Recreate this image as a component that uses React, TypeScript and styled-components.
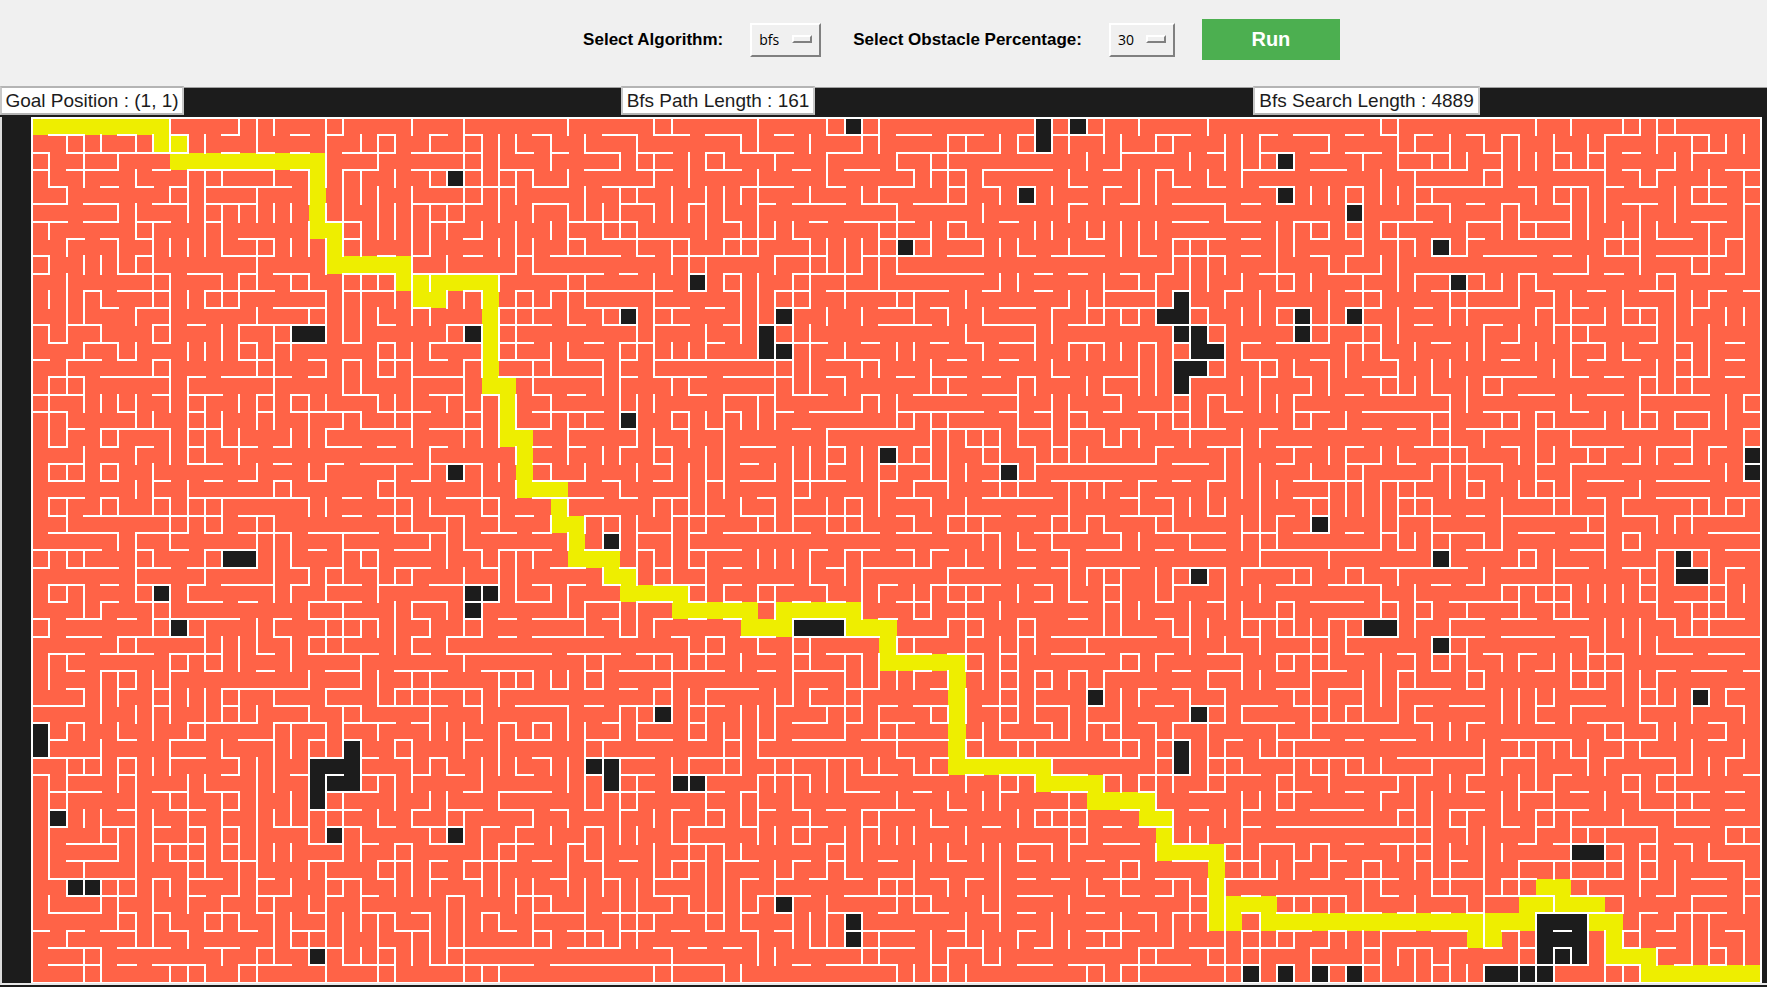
import React from "react";
import styled, { createGlobalStyle } from "styled-components";

const COLS = 100;
const ROWS = 50;
const PITCH = 17.29;

const at = (n: number) => Math.round(n * PITCH);

/* Cells of the found route: row number, then first and last column of each stretch. */
const route: number[][] = [
  [0, 0, 7], [1, 7, 8], [2, 8, 16], [3, 16, 16], [4, 16, 16], [5, 16, 16], [6, 16, 17], [7, 17, 17],
  [8, 17, 21], [9, 21, 26], [10, 22, 23], [10, 26, 26], [11, 26, 26], [12, 26, 26], [13, 26, 26],
  [14, 26, 26], [15, 26, 27], [16, 27, 27], [17, 27, 27], [18, 27, 28], [19, 28, 28], [20, 28, 28],
  [21, 28, 30], [22, 30, 30], [23, 30, 31], [24, 31, 31], [25, 31, 33], [26, 33, 34], [27, 34, 37],
  [28, 37, 41], [28, 43, 47], [29, 41, 43], [29, 47, 49], [30, 49, 49], [31, 49, 53], [32, 53, 53],
  [33, 53, 53], [34, 53, 53], [35, 53, 53], [36, 53, 53], [37, 53, 58], [38, 58, 61], [39, 61, 64],
  [40, 64, 65], [41, 65, 65], [42, 65, 68], [43, 68, 68], [44, 68, 68], [44, 87, 88], [45, 68, 71],
  [45, 86, 90], [46, 68, 69], [46, 71, 86], [46, 90, 91], [47, 83, 84], [47, 91, 91], [48, 91, 93],
  [49, 93, 99],
];

/* Cells the search never reached, in the same form. */
const unreached: number[][] = [
  [0, 47, 47], [0, 58, 58], [0, 60, 60], [1, 58, 58], [2, 72, 72], [3, 24, 24], [4, 57, 57], [4, 72, 72],
  [5, 76, 76], [7, 50, 50], [7, 81, 81], [9, 38, 38], [9, 82, 82], [10, 66, 66], [11, 34, 34], [11, 43, 43],
  [11, 65, 66], [11, 73, 73], [11, 76, 76], [12, 15, 16], [12, 25, 25], [12, 42, 42], [12, 66, 66],
  [12, 67, 67], [12, 73, 73], [13, 42, 43], [13, 67, 68], [14, 66, 67], [15, 66, 66], [17, 34, 34],
  [19, 49, 49], [19, 99, 99], [20, 24, 24], [20, 56, 56], [20, 99, 99], [23, 74, 74], [24, 33, 33],
  [25, 11, 12], [25, 81, 81], [25, 95, 95], [26, 67, 67], [26, 95, 96], [27, 7, 7], [27, 25, 26],
  [28, 25, 25], [29, 8, 8], [29, 44, 46], [29, 77, 78], [30, 81, 81], [33, 61, 61], [33, 96, 96],
  [34, 36, 36], [34, 67, 67], [35, 0, 0], [36, 0, 0], [36, 18, 18], [36, 66, 66], [37, 16, 18],
  [37, 32, 33], [37, 66, 66], [38, 16, 18], [38, 33, 33], [38, 37, 38], [39, 16, 16], [40, 1, 1],
  [41, 17, 17], [41, 24, 24], [42, 89, 90], [44, 2, 3], [45, 43, 43], [46, 47, 47], [46, 87, 89],
  [47, 47, 47], [47, 87, 89], [48, 16, 16], [48, 87, 89], [49, 70, 70], [49, 72, 72], [49, 74, 74],
  [49, 76, 76], [49, 84, 87],
];

/* Walls under each row, as start and end column pairs. */
const floors: string[] = [
  "1 3 5 6 8 9 11 12 15 16 17 18 20 21 23 24 25 26 29 30 33 35 36 38 39 41 43 44 46 49 50 52 53 55 57 58 59 62 65 67 71 72 73 75 76 77 78 79 80 81 83 84 85 86 91 93 94 97",
  "0 1 2 9 11 12 13 14 15 16 18 21 22 26 28 29 30 31 32 34 35 37 39 40 41 44 46 48 50 56 57 59 63 66 68 69 71 73 74 75 76 78 79 82 84 85 88 89 90 91 92 93 96 98",
  "0 1 2 5 7 8 9 14 15 16 18 20 22 26 27 29 32 34 35 37 39 41 44 45 47 49 50 51 52 54 55 59 62 63 65 66 70 73 74 76 79 83 84 85 88 91 92 93 94 95 98 100",
  "1 2 4 5 6 7 8 9 10 15 23 28 29 31 33 36 41 44 46 47 49 51 53 54 55 56 57 58 60 61 62 63 66 67 68 69 71 73 76 77 80 85 86 87 88 90 91 92 93 94 96 98 99 100",
  "0 2 3 5 7 9 10 13 22 26 29 31 34 36 38 39 42 43 44 47 48 50 51 54 57 58 60 61 63 64 66 69 70 71 72 73 76 77 80 82 83 84 85 86 88 89 92 94 96 98 99 100",
  "0 2 3 5 6 8 10 11 17 19 23 25 31 35 40 41 45 46 47 51 53 54 56 57 66 68 69 71 73 75 76 77 78 81 83 85 86 89 96 98",
  "2 3 4 5 6 7 12 14 18 19 25 26 31 32 33 38 40 43 44 45 49 52 53 55 61 62 66 69 70 71 74 75 76 77 78 80 81 82 83 84 86 89 91 93 94 96 98 99",
  "0 1 6 7 11 14 20 21 22 23 25 26 28 29 30 34 35 36 37 42 43 46 48 52 53 55 57 58 59 62 64 65 66 69 70 71 74 75 76 77 81 83 84 87 88 89 91 93 94 98",
  "0 1 5 8 9 11 12 13 14 16 18 21 22 28 29 33 34 35 38 39 40 41 44 48 50 55 58 59 60 61 63 64 65 66 71 73 75 78 80 84 86 87 88 90 91 92 94 95 96 97 98 99",
  "3 4 5 8 10 14 15 17 18 21 25 26 28 29 30 37 38 39 40 41 43 45 46 53 55 56 58 59 62 65 66 67 69 70 72 73 76 78 81 85 87 88 90 91 93 95 97 98 99 100",
  "4 5 6 8 10 12 14 17 22 23 27 30 32 35 36 38 39 40 43 45 49 51 52 53 56 58 59 60 61 66 67 68 72 74 76 78 80 81 82 86 87 88 89 90 92 94 96 97",
  "0 1 2 4 7 8 9 10 12 17 20 21 24 26 27 30 31 32 33 35 36 38 40 41 42 44 49 52 55 58 60 62 63 64 65 69 72 78 80 81 84 85 88 91 92 94",
  "1 2 3 5 7 8 12 13 14 17 18 19 20 21 23 26 27 29 32 33 34 36 39 40 43 46 48 49 52 53 54 55 56 58 60 62 64 65 66 67 68 69 70 71 72 75 76 78 81 82 85 86 89 91 93 94 95 96 98 99",
  "0 1 2 4 5 6 7 8 12 14 16 17 18 19 20 22 23 24 25 26 27 30 31 33 34 35 36 44 46 49 53 54 56 57 66 69 70 72 74 75 78 79 85 86 90 91 92 93 95 96 98 99",
  "1 3 4 8 9 10 11 15 16 17 20 21 22 25 27 33 34 35 36 39 40 44 46 47 50 51 52 54 55 56 57 58 59 60 62 64 67 69 71 72 73 74 77 79 84 87 89 90 91 92 93 94 95 97 98 99",
  "0 3 7 8 9 11 13 14 15 16 18 20 23 25 26 27 29 30 31 32 38 39 40 43 44 46 48 49 51 54 55 57 62 63 66 67 68 69 73 74 76 77 78 80 81 82 84 85 86 88 90 92 93 97 99 100",
  "0 2 5 6 9 10 13 14 15 19 20 23 25 26 29 33 34 35 37 38 40 41 43 44 45 48 50 55 56 57 58 59 60 61 62 63 64 67 69 70 73 75 77 82 84 86 87 88 89 90 93 94 95 97 99 100",
  "2 3 4 8 9 11 17 18 19 22 23 26 28 30 31 33 34 35 37 38 39 40 44 45 46 51 52 56 57 59 60 62 63 64 66 69 71 72 73 74 75 76 77 78 79 80 81 82 83 86 87 91 92 94 95 97 99 100",
  "1 2 4 5 6 7 9 10 11 13 14 15 17 19 20 21 23 24 29 30 31 32 34 35 36 37 41 43 46 47 49 50 51 52 54 56 57 58 59 60 62 63 65 66 68 70 72 74 76 77 80 83 85 86 89 92 94 96 97 98 99 100",
  "1 3 4 5 9 11 14 15 17 18 19 22 23 26 29 30 36 37 41 42 46 47 49 52 55 57 58 65 66 68 72 73 76 78 79 80 81 85 87 88 89 91 92 93 95 96 99 100",
  "1 3 4 5 7 8 10 11 12 13 14 15 16 17 20 21 22 23 24 25 29 32 33 34 36 37 39 40 41 43 44 47 49 50 51 53 55 58 59 63 64 65 66 67 68 69 73 77 78 81 83 84 87 88 90 92 94 97 99 100",
  "1 3 4 5 7 8 9 16 18 19 20 22 24 27 29 33 34 35 36 38 42 43 44 45 47 48 50 52 55 59 63 64 65 66 73 75 79 81 83 84 86 89 90 91 92 93 94 97 98 100",
  "1 2 3 11 12 14 18 19 20 22 23 25 26 27 28 29 32 34 37 40 41 43 44 48 50 51 53 56 57 58 59 60 61 62 63 66 68 69 72 73 74 75 79 82 83 84 85 91 92 94 95 99",
  "1 5 6 9 10 11 12 15 16 20 21 24 26 28 29 30 33 34 35 37 38 39 40 45 46 49 50 52 53 56 58 61 62 63 65 69 70 72 73 75 76 77 78 79 81 84 86 88 89 91 92 93 97 100",
  "0 4 6 7 8 9 10 13 16 17 18 20 21 23 25 26 27 30 32 34 35 36 38 41 45 46 47 49 50 51 52 53 57 58 59 60 61 63 65 66 67 69 71 78 79 80 81 82 83 85 86 87 89 91 92 93 94 97 98 100",
  "0 1 2 5 6 8 9 13 15 16 17 18 19 20 21 23 26 27 30 32 34 35 36 37 38 39 40 41 46 47 48 52 53 55 57 58 59 60 61 64 66 69 70 74 76 77 78 83 85 87 88 90 92 94 95 97 98 99",
  "1 3 4 5 6 8 9 10 11 14 15 16 17 19 20 22 23 27 29 30 31 32 33 34 36 39 40 41 42 44 45 46 49 50 52 56 58 59 62 63 66 68 72 74 75 78 81 82 83 84 85 89 93 94 95 98",
  "1 2 4 5 6 8 9 11 12 13 16 19 22 24 25 27 28 30 32 34 35 37 38 39 40 41 42 43 44 45 46 47 50 52 53 55 58 59 60 61 62 63 65 66 68 69 72 73 74 77 78 79 80 81 82 86 87 89 93 94 95 98",
  "0 1 2 4 5 6 7 12 14 15 16 20 22 23 25 26 27 28 29 32 33 34 36 37 38 39 40 41 44 47 49 50 51 52 53 55 57 58 60 61 65 66 70 73 75 79 80 81 82 84 85 87 88 90 94 95 96 99",
  "0 1 2 4 5 10 14 15 16 19 22 23 24 26 27 28 29 33 34 35 37 38 39 40 41 43 44 49 50 53 54 55 57 58 59 65 66 67 70 71 72 75 76 79 81 84 85 88 89 90 95 100",
  "1 3 4 7 8 11 13 14 16 20 22 23 24 30 31 34 35 37 38 40 42 43 44 45 46 48 50 52 53 55 56 57 59 62 63 64 65 66 68 70 72 75 76 77 79 80 81 83 84 85 86 87 90 92 94 96 97 99",
  "2 3 4 6 8 9 10 11 13 14 17 19 21 24 26 29 32 33 34 40 42 43 44 47 51 52 54 55 56 57 58 59 60 61 62 64 66 67 68 70 72 73 74 76 79 80 81 82 83 84 87 88 89 92 94 95 96 98 99 100",
  "2 3 5 6 7 8 11 16 17 19 21 26 27 29 30 31 32 33 34 35 36 37 39 42 45 46 47 49 52 53 56 57 58 59 61 62 64 65 66 67 68 69 72 74 75 77 79 82 83 84 89 91 93 94 96 97 98 99",
  "0 3 7 8 11 12 14 16 17 19 20 24 25 26 28 31 32 33 34 37 38 40 43 44 45 48 49 50 51 53 55 57 58 60 61 62 65 66 67 69 70 72 73 75 76 77 80 81 82 84 87 88 89 91 93 95 96 97 98 99",
  "0 1 2 3 9 13 14 17 18 21 22 23 27 28 29 30 33 34 35 37 38 39 44 46 47 48 49 51 52 53 56 57 58 59 61 63 64 65 66 69 70 73 74 79 80 81 83 84 87 88 90 92 93 94 97 98",
  "1 2 5 6 8 10 12 14 16 17 18 19 21 22 25 26 28 30 32 34 35 37 38 39 40 41 42 43 44 47 48 53 54 55 56 60 62 64 65 67 69 70 72 75 76 77 78 80 85 89 91 94 97 98",
  "0 4 5 6 8 10 11 12 16 18 19 20 21 22 23 24 29 30 32 36 38 41 42 48 50 51 52 53 54 64 65 66 68 70 71 77 79 84 85 87 89 90 91 92 93 95 98 99",
  "0 1 2 4 5 6 11 12 15 16 17 18 19 21 22 23 24 25 28 29 32 33 34 36 37 41 42 45 48 50 51 53 54 55 56 58 59 61 62 63 64 67 68 71 72 73 74 75 76 81 83 84 88 89 92 93 94 96 99 100",
  "1 4 7 9 10 12 17 20 25 26 27 30 33 36 37 40 41 42 47 49 51 52 56 57 59 61 64 65 67 69 72 74 76 77 78 79 83 84 86 88 89 90 92 93 94 97 98 99",
  "1 2 5 6 8 10 11 12 16 19 22 23 24 26 27 29 30 31 32 33 34 35 37 38 39 40 42 43 44 45 46 47 48 51 53 54 58 61 63 64 65 66 67 68 70 71 72 73 74 77 79 80 82 84 87 90 93 97 98 99",
  "1 2 4 6 7 8 9 10 11 12 14 16 17 19 20 21 22 25 26 27 28 29 32 33 38 40 41 42 44 46 48 49 52 53 55 56 58 61 62 63 64 66 70 71 72 81 82 83 85 86 87 88 89 94 95 97 98 100",
  "2 5 7 10 11 12 16 18 19 20 21 22 23 25 27 29 31 32 37 40 44 45 46 47 57 59 60 61 62 64 66 68 69 70 71 73 74 75 76 77 78 81 86 87 88 92 93 94 95 96 98 100",
  "2 5 8 10 11 13 16 18 20 22 23 24 25 28 29 30 32 33 34 35 37 39 40 42 44 45 46 47 49 50 53 54 57 58 61 62 63 64 66 68 69 71 73 74 75 76 77 78 80 81 82 83 86 92 93 94 97 99",
  "1 6 7 8 9 11 13 14 17 19 20 21 23 24 25 26 30 31 33 34 36 38 41 42 43 44 45 46 47 48 49 51 52 53 54 55 57 58 59 60 62 64 65 67 69 72 74 75 76 79 81 84 85 87 89 92 93 94 96 98 99 100",
  "2 6 9 10 11 12 13 15 17 18 19 20 24 25 28 30 36 38 42 45 47 52 57 59 61 62 63 64 65 66 67 68 70 71 72 76 78 79 81 83 84 88 89 92 94 95 96 98 99 100",
  "1 4 5 6 7 8 10 12 13 14 16 17 19 21 22 23 26 27 29 32 33 37 38 40 41 42 43 44 46 48 49 50 51 53 55 56 57 58 61 62 64 65 66 68 70 71 72 74 76 78 79 80 81 82 83 84 87 92 93 94 95 98",
  "0 1 2 3 4 6 8 9 10 11 12 13 15 17 21 23 27 28 29 30 31 33 34 36 37 38 39 40 41 42 43 44 47 51 53 54 57 58 61 64 70 71 72 74 75 76 78 80 81 83 85 86 88 89 92 93 94 95 98 99",
  "1 4 5 8 10 12 13 14 15 18 20 21 24 30 31 34 36 37 38 39 40 41 45 51 53 55 58 59 61 63 64 66 67 69 70 73 74 75 77 78 79 81 82 83 84 85 86 87 88 89 92 93 94 95 97 98",
  "1 4 5 6 7 10 12 15 16 17 18 21 23 29 30 40 44 45 46 50 52 53 55 56 57 59 60 62 63 67 68 71 72 73 74 78 81 82 84 90 91 93 95 96 97 98",
];

/* Columns at whose left edge each row has a wall. */
const sides: string[] = [
  "8 12 13 14 17 18 22 25 31 36 37 42 46 47 48 49 58 59 60 61 62 64 68 78 79 87 89 92 93 94 95",
  "2 3 4 6 7 8 9 10 13 17 19 20 21 23 25 26 27 28 30 32 35 41 42 45 48 49 53 54 56 57 58 59 60 62 63 65 66 69 70 71 75 79 80 82 84 85 86 88 90 91 94 96 97 98 99",
  "1 3 5 17 20 25 26 27 30 34 35 36 38 39 40 43 46 50 52 53 61 63 67 69 70 71 72 73 77 79 81 82 83 85 86 87 88 89 90 91 95 96",
  "1 3 6 9 10 11 14 16 17 18 19 21 23 24 25 26 27 28 29 31 36 38 42 46 51 52 53 54 55 60 64 65 66 68 70 78 80 84 85 91 93 94 97 99",
  "2 8 9 10 13 16 18 19 20 22 25 26 27 28 32 34 35 37 39 40 41 42 45 48 49 53 54 56 57 58 59 62 64 65 72 73 74 75 76 77 78 79 80 81 87 88 89 90 91 95 96 97 99",
  "5 6 9 10 11 12 13 14 15 17 18 20 21 22 23 24 25 27 29 31 32 33 34 36 37 38 39 40 42 50 55 60 69 76 77 80 82 85 86 89 90 91 93 95 99",
  "1 6 7 10 11 16 18 19 20 21 22 23 24 26 28 30 31 33 34 35 39 41 42 43 44 49 50 52 53 54 58 59 61 62 63 64 65 72 73 74 75 76 77 78 79 83 85 86 87 89 90 92 93 94 97 99",
  "2 5 7 8 9 10 11 13 14 15 16 17 18 19 22 23 27 28 29 31 32 35 37 38 40 41 42 45 46 47 48 49 50 51 52 55 56 57 60 63 64 66 67 68 72 73 77 79 80 81 82 83 91 92 93 97 98 99",
  "1 3 4 5 6 7 13 17 22 24 28 29 37 38 39 43 45 46 47 48 49 50 66 67 68 69 72 75 76 78 79 90 93 96 97 99",
  "2 7 8 11 12 13 15 16 18 19 20 21 22 23 27 31 32 36 38 39 40 41 42 44 45 47 49 56 57 62 64 65 67 68 70 72 73 74 77 79 80 82 83 84 85 86 87 94 95",
  "1 2 3 4 7 8 9 10 11 12 17 18 19 21 22 24 25 26 28 29 30 31 32 36 41 42 43 44 45 47 50 51 54 60 61 62 65 66 67 69 71 75 77 78 82 83 86 88 89 92 95 96 97",
  "2 3 6 8 13 16 17 18 19 20 22 23 27 28 29 31 33 34 35 36 37 41 42 43 44 46 48 51 53 55 59 61 62 63 64 65 67 68 70 71 72 73 74 75 76 77 79 82 83 87 88 89 91 92 93 94 95 96 98 99",
  "1 2 4 7 8 11 12 14 15 17 18 19 24 25 26 27 28 35 36 39 41 42 43 44 45 54 58 59 66 67 68 69 73 74 75 77 78 79 84 86 88 89 90 94 95 97",
  "3 5 6 9 10 11 12 13 14 15 20 21 22 23 26 27 28 30 31 34 35 36 37 38 39 42 43 44 45 47 50 51 55 58 60 61 62 63 64 65 66 67 69 70 76 77 78 80 83 84 87 89 91 92 95 96 97",
  "2 7 8 13 14 17 18 19 20 21 22 25 26 29 30 33 34 36 43 44 45 48 49 52 59 64 65 66 68 69 71 72 73 75 76 79 81 82 88 89 94 95 96 97",
  "1 2 3 8 9 14 18 19 22 25 29 33 34 37 38 43 44 45 47 52 53 57 58 61 62 64 65 66 67 70 71 74 75 78 79 80 81 83 84 85 93 94 95 96",
  "1 3 4 5 6 8 9 10 12 13 14 15 16 17 20 21 22 24 25 26 27 28 30 34 35 36 40 42 43 48 49 50 57 59 60 63 66 67 68 69 71 72 73 82 83 89 93 98 99",
  "1 2 6 7 9 10 11 13 14 16 18 19 21 22 25 26 27 28 30 31 32 34 35 37 38 39 40 41 42 43 50 51 52 53 57 59 60 61 65 66 67 68 73 74 76 81 82 85 86 87 88 91 92 93 94 95 97 98",
  "1 2 4 5 8 9 10 11 12 15 16 17 22 25 26 27 31 35 36 38 40 46 52 53 54 55 56 57 59 60 62 63 64 67 70 71 81 82 84 87 89 96 99",
  "3 6 8 9 10 12 23 28 31 33 34 36 37 39 40 44 45 46 47 48 49 50 51 52 53 55 56 58 59 60 61 65 69 70 73 75 76 78 79 82 83 86 87 88 90 91 93 94 96 97 99",
  "1 2 3 4 5 7 13 16 17 21 23 24 25 26 27 30 32 35 37 38 39 40 43 44 45 46 48 49 50 52 53 54 56 57 58 69 70 71 74 76 77 81 82 83 85 87 89 98 99",
  "6 7 9 14 15 20 21 26 28 34 38 39 40 44 45 49 51 53 56 57 60 61 62 64 68 70 71 72 75 76 77 78 79 80 82 83 84 86 87 88 89 93",
  "1 2 4 5 7 8 9 10 11 16 17 21 22 23 26 27 31 36 37 38 39 41 43 44 46 47 48 49 52 54 60 64 66 67 68 69 71 74 75 76 77 78 79 80 81 85 88 89 91 92 96 97 98 99",
  "2 8 9 10 11 13 14 21 22 24 25 27 30 32 33 34 35 37 38 39 42 43 44 46 47 48 51 53 54 55 59 60 61 62 65 66 70 71 72 74 75 78 79 81 85 90 91 94 95 96",
  "5 6 8 13 14 15 18 23 24 25 31 33 34 35 37 38 55 56 57 59 63 64 67 70 71 72 78 79 80 81 82 84 85 91 92 93",
  "1 2 3 6 7 10 11 13 14 15 18 19 20 24 26 27 28 29 35 36 37 38 39 42 43 44 45 47 48 51 52 54 56 60 71 75 81 82 86 87 88 91 94 95 96 97",
  "6 10 14 16 17 18 20 21 22 25 27 28 33 35 36 37 39 45 47 48 53 60 61 62 63 65 66 67 68 69 70 73 74 76 77 79 84 88 93 94 95 97 98",
  "1 2 3 6 7 8 9 14 15 17 20 25 26 27 28 30 31 38 39 40 42 43 46 48 49 51 52 53 54 55 57 59 60 62 63 65 66 69 71 78 80 85 86 87 88 89 90 91 92 93 94 97 98 99",
  "3 4 7 8 16 18 21 22 24 25 26 31 32 34 35 43 48 51 52 54 56 62 63 64 67 69 70 72 73 78 79 80 81 83 86 88 89 94 96 97 98",
  "1 7 8 9 10 13 14 17 18 19 20 21 23 25 26 32 34 35 36 44 47 53 54 55 57 58 62 63 66 67 68 70 71 72 73 74 75 76 77 79 80 82 91 92 93 95 96 97",
  "5 6 10 11 12 13 15 16 17 18 21 22 24 38 39 40 42 44 45 50 51 54 56 57 58 61 67 69 71 74 75 76 81 82 83 90 91 93 94",
  "1 2 8 9 10 11 12 15 19 25 32 33 36 37 38 39 41 44 45 47 48 49 54 55 56 57 63 64 65 70 72 73 74 75 78 80 81 82 83 85 86 88 89 90 91 92",
  "1 4 5 6 7 8 16 19 20 22 23 27 28 29 30 31 32 33 37 44 47 48 49 50 51 53 55 56 57 58 59 60 61 62 68 70 71 74 77 78 79 80 83 84 89 90 91 92 93 94",
  "3 4 5 7 8 9 10 11 12 14 17 20 21 22 23 25 26 27 36 37 38 39 43 44 45 47 48 54 56 57 58 61 62 63 64 67 69 73 74 75 77 78 79 85 86 87 88 92 93 94 95 96 97 98",
  "4 6 7 8 10 11 12 13 16 18 19 23 26 31 34 35 36 37 38 39 41 42 43 46 47 48 49 52 53 54 56 57 58 60 61 63 67 68 69 70 74 75 76 77 79 80 85 86 87 89 93 96 99",
  "1 2 3 5 7 9 10 14 15 17 18 20 23 24 25 27 28 29 30 31 32 34 35 38 39 40 41 42 43 47 49 50 55 56 59 60 61 62 63 65 66 68 72 74 81 82 83 91 92 94 95 98",
  "1 4 8 11 14 15 16 17 18 19 21 22 25 27 32 33 40 41 42 50 54 55 57 58 63 64 65 66 67 68 69 71 72 73 84 86 87 88 89 90 92 93 96 99",
  "2 3 4 5 6 7 8 12 13 14 16 19 22 23 24 26 27 28 30 31 32 33 34 37 38 40 41 43 44 46 47 48 49 51 52 59 65 66 67 68 69 70 73 74 75 76 77 78 81 84 85 87 90 91 95 96 97 98",
  "1 2 5 6 9 10 13 14 16 17 19 20 21 22 26 31 32 33 34 35 37 38 39 42 43 44 45 46 47 54 56 57 58 62 63 64 65 66 68 69 72 73 75 79 80 82 83 86 87 88 92 93 94 95",
  "1 2 6 8 9 11 12 13 15 16 17 18 21 23 24 27 32 33 34 35 39 41 42 44 50 53 55 56 60 65 70 71 72 73 78 80 81 85 86 88 91 93 95 96",
  "1 2 3 4 6 7 9 11 13 14 15 16 17 18 20 22 24 25 29 31 34 36 37 39 40 41 42 45 48 49 52 57 58 59 60 61 66 69 70 79 80 81 82 83 85 87 88 89 92 95",
  "1 4 5 6 7 9 10 11 12 13 16 17 18 19 23 24 25 26 28 30 32 33 34 35 37 38 42 43 44 45 47 48 49 50 51 54 60 61 66 67 68 70 80 81 83 84 87 89 90 91 94 98 99",
  "1 5 6 7 8 9 10 11 12 13 14 15 18 19 21 22 26 27 28 31 32 33 36 38 39 40 41 46 47 48 52 53 55 56 57 59 60 65 69 70 71 73 74 75 79 80 81 82 84 85 89 91 92 93 94 96 97",
  "1 3 6 9 10 12 13 16 17 20 21 22 23 25 26 27 31 33 36 37 38 39 40 43 44 46 47 51 56 63 64 70 71 72 73 75 77 78 80 81 82 84 86 88 89 91 92 93 94 95 99",
  "2 3 4 5 6 7 8 9 12 13 15 17 18 19 21 22 23 26 27 28 29 31 32 33 34 35 36 39 40 41 43 49 50 51 53 54 56 61 63 66 67 68 69 77 78 81 82 84 85 86 90 93 95 99",
  "1 4 5 7 9 11 13 14 16 17 19 24 25 28 29 30 32 34 35 37 38 39 40 41 42 43 44 46 50 51 52 55 56 60 67 68 69 73 74 75 76 77 80 83 84 88 92 96 99",
  "5 6 7 8 10 11 12 14 15 17 18 19 20 21 23 24 25 26 27 29 32 34 35 36 39 40 41 44 45 46 47 48 54 56 59 63 65 66 67 68 69 71 84 87 90 93 95 96 97",
  "2 6 7 9 14 15 16 17 18 20 22 23 24 25 29 30 32 33 34 35 42 44 45 46 47 48 49 52 54 55 57 59 60 62 63 66 69 70 71 72 73 75 76 77 78 84 86 87 90 91 92 93 96 97 99",
  "3 4 11 13 14 16 17 18 19 20 21 22 23 24 25 37 42 43 48 49 52 53 55 56 64 65 68 69 70 71 74 77 78 79 80 81 82 86 87 88 89 90 91 94 96 97 98 99",
  "3 4 8 9 10 12 13 17 20 21 25 26 27 36 37 40 41 50 51 52 53 54 61 62 63 64 69 70 71 72 73 74 75 76 77 78 80 81 82 83 84 86 87 88 91 92 93",
];

const isUnreached = (row: number, col: number) =>
  unreached.some(([r, a, b]) => r === row && col >= a && col <= b);

const cellPath = (runs: number[][]) =>
  runs
    .map(([r, a, b]) => `M${at(a)} ${at(r)}H${at(b + 1)}V${at(r + 1)}H${at(a)}Z`)
    .join("");

function wallPath() {
  const parts: string[] = [`M0 0H${at(COLS)}V${at(ROWS)}H0Z`];
  floors.forEach((line, i) => {
    const n = line.split(" ").map(Number);
    for (let k = 0; k + 1 < n.length; k += 2) {
      parts.push(`M${at(n[k])} ${at(i + 1)}H${at(n[k + 1])}`);
    }
  });
  sides.forEach((line, r) => {
    line.split(" ").forEach((c) => parts.push(`M${at(Number(c))} ${at(r)}V${at(r + 1)}`));
  });
  for (const [r, a, b] of unreached) {
    for (let c = a; c <= b; c++) {
      if (!isUnreached(r - 1, c)) parts.push(`M${at(c)} ${at(r)}H${at(c + 1)}`);
      if (!isUnreached(r + 1, c)) parts.push(`M${at(c)} ${at(r + 1)}H${at(c + 1)}`);
      if (!isUnreached(r, c - 1)) parts.push(`M${at(c)} ${at(r)}V${at(r + 1)}`);
      if (!isUnreached(r, c + 1)) parts.push(`M${at(c + 1)} ${at(r)}V${at(r + 1)}`);
    }
  }
  return parts.join("");
}

const routeShape = cellPath(route);
const unreachedShape = cellPath(unreached);
const walls = wallPath();

const GlobalStyle = createGlobalStyle`
  *, *::before, *::after { box-sizing: border-box; }
  body {
    margin: 0;
    background: #1c1c1c;
    font-family: "Liberation Sans", Arial, sans-serif;
  }
`;

const Toolbar = styled.form`
  display: flex;
  align-items: center;
  gap: 32px;
  padding: 19px 0 27px 33%;
  background: #f0f0f0;
`;

const Field = styled.div`
  display: flex;
  align-items: center;
  gap: 27px;
`;

const FieldLabel = styled.label`
  font-size: 17px;
  font-weight: 700;
  line-height: 20px;
  color: #000;
  white-space: nowrap;
`;

const OptionMenu = styled.div<{ $width: number }>`
  position: relative;
  width: ${(p) => p.$width}px;
  height: 34px;

  &::after {
    content: "";
    position: absolute;
    right: 9px;
    top: 12px;
    width: 20px;
    height: 8px;
    background: #f0f0f0;
    border: 2px solid;
    border-color: #fff #808080 #808080 #fff;
    pointer-events: none;
  }
`;

const Select = styled.select`
  appearance: none;
  width: 100%;
  height: 100%;
  padding: 0 0 0 7px;
  border: 2px solid;
  border-color: #fff #808080 #808080 #fff;
  border-radius: 0;
  background: #f0f0f0;
  color: #000;
  font: 14px "Open Sans", "Noto Sans", sans-serif;
`;

const RunButton = styled.button`
  width: 138px;
  height: 41px;
  margin-left: -5px;
  border: 0;
  background: #4caf50;
  color: #fff;
  font: 700 20px "Liberation Sans", Arial, sans-serif;
`;

const StatusBar = styled.div`
  display: grid;
  grid-template-columns: 621fr 632fr 514fr;
  align-items: start;
  height: 30px;
  border-top: 1px solid #a0a0a0;
`;

const Status = styled.output<{ $width: number }>`
  position: relative;
  width: ${(p) => p.$width}px;
  margin-top: -2px;
  padding: 0 1px;
  border: 2px solid;
  border-color: #b4b4b4 #c8c8c8 #b4b4b4 #c8c8c8;
  background: #fff;
  color: #1c1c1c;
  font-size: 19px;
  line-height: 25px;
  text-align: center;
  white-space: nowrap;
`;

const Board = styled.main`
  padding: 0 4px 0 29px;
  border-left: 2px solid #dcdcdc;
  border-bottom: 2px solid #e8e8e8;
`;

const Maze = styled.svg`
  display: block;
  width: 100%;
  height: auto;
`;

export default function App() {
  return (
    <>
      <GlobalStyle />
      <Toolbar onSubmit={(e) => e.preventDefault()}>
        <Field>
          <FieldLabel htmlFor="algorithm">Select Algorithm:</FieldLabel>
          <OptionMenu $width={71}>
            <Select id="algorithm" defaultValue="bfs">
              <option>bfs</option>
            </Select>
          </OptionMenu>
        </Field>
        <Field>
          <FieldLabel htmlFor="obstacles">Select Obstacle Percentage:</FieldLabel>
          <OptionMenu $width={66}>
            <Select id="obstacles" defaultValue="30">
              <option>30</option>
            </Select>
          </OptionMenu>
        </Field>
        <RunButton type="submit">Run</RunButton>
      </Toolbar>
      <StatusBar>
        <Status $width={184}>Goal Position : (1, 1)</Status>
        <Status $width={194}>Bfs Path Length : 161</Status>
        <Status $width={227}>Bfs Search Length : 4889</Status>
      </StatusBar>
      <Board>
        <Maze viewBox="-1 -1 1732 866" role="img" aria-label="Maze with the path found">
          <rect width={at(COLS)} height={at(ROWS)} fill="#ff6347" />
          <path d={routeShape} fill="#eeee00" />
          <path d={unreachedShape} fill="#1c1c1c" />
          <path d={walls} fill="none" stroke="#fff" strokeWidth="2" strokeLinecap="square" />
        </Maze>
      </Board>
    </>
  );
}
